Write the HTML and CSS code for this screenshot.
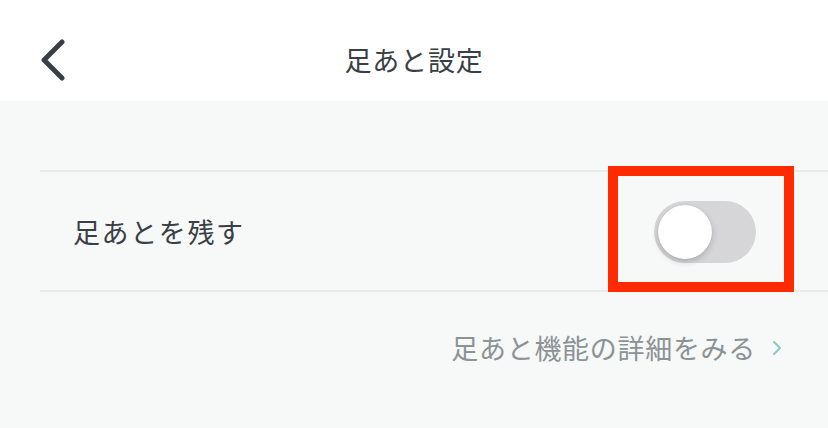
FILE: index.html
```html
<!DOCTYPE html>
<html lang="ja">
<head>
<meta charset="utf-8">
<link rel="stylesheet" href="styles.css">
</head>
<body>
<div class="screen">
  <header class="header">
    <button class="back" aria-label="戻る">
      <svg width="30" height="42" viewBox="0 0 30 42"><polyline points="24,3 6,21 24,39" fill="none" stroke="#3a3f45" stroke-width="5" stroke-linecap="round" stroke-linejoin="round"/></svg>
    </button>
    <h1 class="title">足あと設定</h1>
    <span class="spacer"></span>
  </header>
  <main class="content">
    <div class="row">
      <span class="row-label">足あとを残す</span>
      <div class="toggle-wrap">
        <div class="toggle"><span class="knob"></span></div>
        <span class="highlight"></span>
      </div>
    </div>
    <a class="detail-link">足あと機能の詳細をみる<svg class="chev" width="10" height="16" viewBox="0 0 10 16"><polyline points="2,2 8,8 2,14" fill="none" stroke="#86cdc4" stroke-width="2" stroke-linecap="round" stroke-linejoin="round"/></svg></a>
  </main>
</div>
</body>
</html>
```

FILE: styles.css
```css
html, body {
  margin: 0;
  padding: 0;
}
body {
  width: 828px;
  height: 428px;
  overflow: hidden;
  background: #f7f8f8;
  font-family: "Noto Sans CJK JP", "Noto Sans", sans-serif;
  color: #3a3f45;
}
.screen {
  display: flex;
  flex-direction: column;
  height: 428px;
}
.header {
  height: 101px;
  box-sizing: border-box;
  background: #ffffff;
  display: grid;
  grid-template-columns: 120px 1fr 120px;
  align-items: center;
  padding-top: 18px;
}
.back {
  border: 0;
  background: none;
  padding: 0;
  margin-left: 38px;
  width: 30px;
  height: 42px;
  display: flex;
}
.title {
  margin: 0;
  text-align: center;
  font-size: 27px;
  font-weight: 400;
  letter-spacing: 0.8px;
  color: #3a3f45;
  line-height: 1;
}
.content {
  padding: 69px 0 0 40px;
  display: flex;
  flex-direction: column;
}
.row {
  height: 118px;
  border-top: 2px solid #e9ebeb;
  border-bottom: 2px solid #e9ebeb;
  display: flex;
  align-items: center;
  justify-content: space-between;
  padding: 0 72px 0 33px;
}
.row-label {
  font-size: 27px;
  letter-spacing: 1.6px;
  color: #3a3f45;
}
.toggle-wrap {
  position: relative;
  width: 102px;
  height: 62px;
  margin-top: 2px;
}
.toggle {
  width: 102px;
  height: 62px;
  border-radius: 31px;
  background: #d6d6d8;
  box-sizing: border-box;
  padding: 4px;
  display: flex;
  align-items: center;
}
.knob {
  width: 54px;
  height: 54px;
  border-radius: 50%;
  background: #ffffff;
  box-shadow: 0 3px 6px rgba(0, 0, 0, 0.18), 0 0 1px rgba(0, 0, 0, 0.2);
}
.highlight {
  position: absolute;
  left: -46px;
  top: -35px;
  width: 186px;
  height: 126px;
  box-sizing: border-box;
  border: 10px solid #ff2a00;
}
.detail-link {
  align-self: flex-end;
  margin-top: 36px;
  margin-right: 46px;
  font-size: 27px;
  letter-spacing: 0.7px;
  color: #8b9395;
  display: flex;
  align-items: center;
  gap: 16px;
}
.chev {
  display: block;
}
```
